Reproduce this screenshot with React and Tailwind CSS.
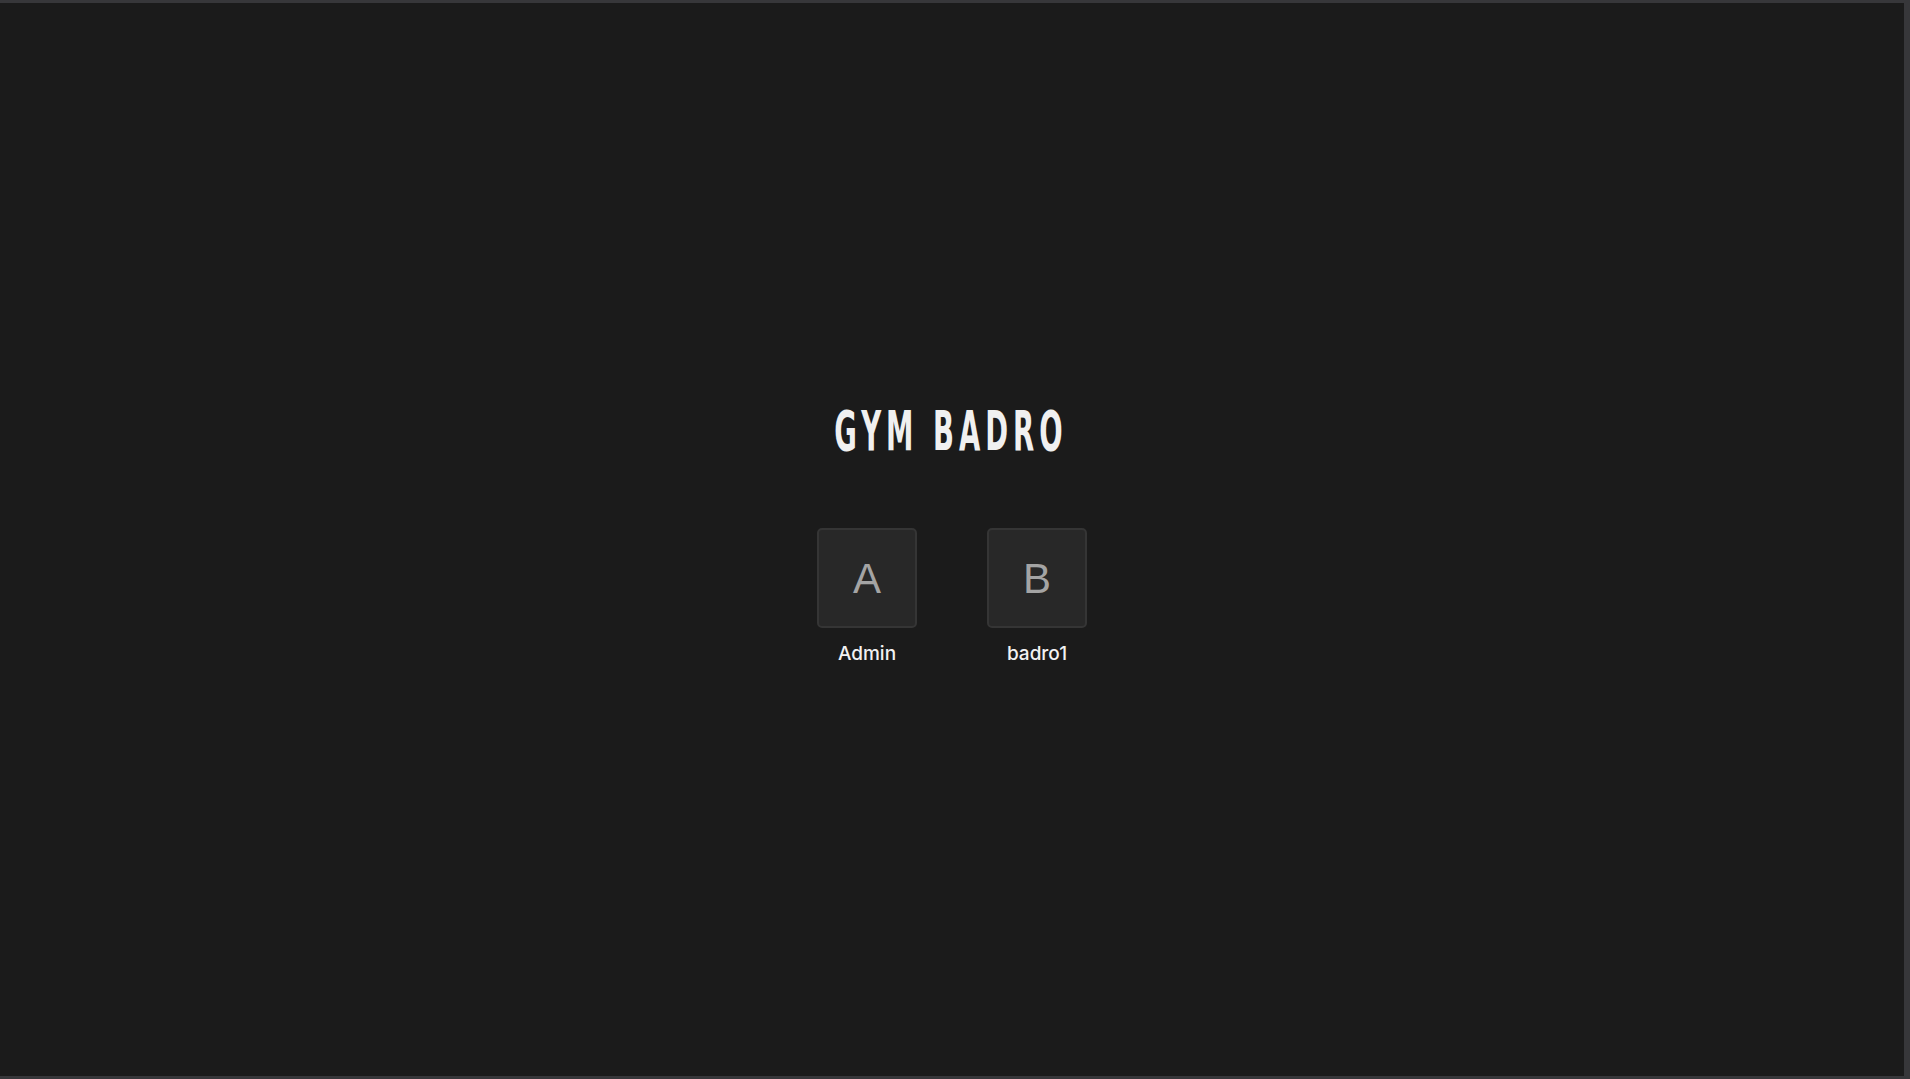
const users = [
  { initial: "A", name: "Admin" },
  { initial: "B", name: "badro1" },
];

export default function App() {
  return (
    <div className="h-screen w-full bg-[#1b1b1b] border-t-[3px] border-b-[3px] border-r-[6px] border-[#37373a] flex flex-col items-center">
      <h1
        className="mt-[398px] pr-[6px] text-[#f0f0f0] text-[55px] leading-[60px] font-bold tracking-[10px] scale-x-[0.5]"
        style={{ fontFamily: '"DejaVu Sans", sans-serif' }}
      >
        GYM BADRO
      </h1>
      <div className="mt-[67px] flex gap-[70px]">
        {users.map((u) => (
          <div key={u.name} className="flex flex-col items-center">
            <div className="w-[100px] h-[100px] rounded-[5px] bg-[#282828] border-2 border-[#353535] flex items-center justify-center">
              <span className="text-[#a4a4a4] text-[42px]" style={{ fontFamily: '"Liberation Sans", Arial, sans-serif' }}>
                {u.initial}
              </span>
            </div>
            <span className="mt-[12px] text-[#f2f2f2] text-[19px] font-medium" style={{ fontFamily: '"Inter", sans-serif' }}>
              {u.name}
            </span>
          </div>
        ))}
      </div>
    </div>
  );
}
